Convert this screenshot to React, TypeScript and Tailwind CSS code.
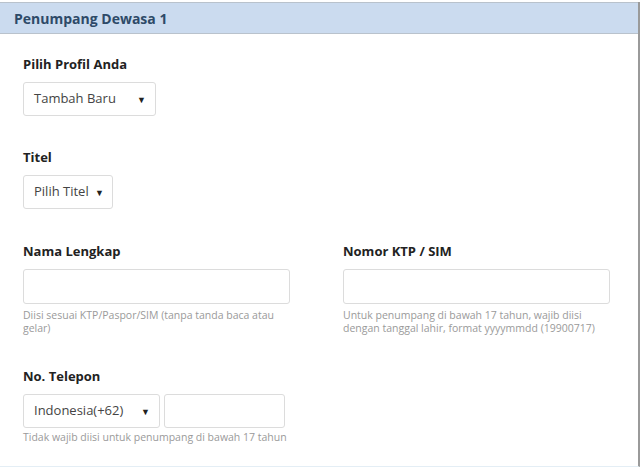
import { ReactNode } from 'react';

const font = { fontFamily: '"Open Sans", "Noto Sans", sans-serif' };

function Caret() {
  return <span className="text-[9px] leading-none text-[#222]">▼</span>;
}

function SelectBox({ label, width, pad }: { label: string; width: string; pad: string }) {
  return (
    <div
      className={`flex h-[34px] ${width} items-center justify-between rounded-[3px] border border-[#dcdcdc] bg-white pl-[10px] ${pad} text-[13px] text-[#444]`}
    >
      <span>{label}</span>
      <Caret />
    </div>
  );
}

function Label({ children }: { children: ReactNode }) {
  return <div className="mb-[9px] text-[13px] font-bold leading-[18px] text-[#222]">{children}</div>;
}

function Help({ children, className = 'mt-[5px]' }: { children: ReactNode; className?: string }) {
  return <p className={`${className} text-[10.5px] leading-[13px] text-[#9a9a9a]`}>{children}</p>;
}

export default function App() {
  return (
    <div className="h-[467px] w-[640px] bg-white pt-[2px]" style={font}>
      <div className="flex h-[465px] flex-col border-r-2 border-[#9a9a9a] border-b border-b-[#e4eef5]">
        {/* Header */}
        <div className="flex h-[32px] items-center border-y border-[#b9c2cc] bg-[#cbdbef] px-[14px]">
          <span className="text-[14px] font-bold text-[#2e4a68]">Penumpang Dewasa 1</span>
        </div>

        <div className="flex flex-col px-[23px] pt-[21px]">
          {/* Profil */}
          <Label>Pilih Profil Anda</Label>
          <SelectBox label="Tambah Baru" width="w-[133px]" pad="pr-[9px]" />

          {/* Titel */}
          <div className="mt-[32px]">
            <Label>Titel</Label>
            <SelectBox label="Pilih Titel" width="w-[90px]" pad="pr-[8px]" />
          </div>

          {/* Nama & KTP */}
          <div className="mt-[33px] grid grid-cols-[267px_267px] gap-x-[53px]">
            <div>
              <Label>Nama Lengkap</Label>
              <div className="h-[35px] rounded-[3px] border border-[#dcdcdc] bg-white" />
              <Help>Diisi sesuai KTP/Paspor/SIM (tanpa tanda baca atau gelar)</Help>
            </div>
            <div>
              <Label>Nomor KTP / SIM</Label>
              <div className="h-[35px] rounded-[3px] border border-[#dcdcdc] bg-white" />
              <Help>Untuk penumpang di bawah 17 tahun, wajib diisi dengan tanggal lahir, format yyyymmdd (19900717)</Help>
            </div>
          </div>

          {/* Telepon */}
          <div className="mt-[32px]">
            <Label>No. Telepon</Label>
            <div className="flex gap-[4px]">
              <SelectBox label="Indonesia(+62)" width="w-[137px]" pad="pr-[9px]" />
              <div className="h-[34px] w-[121px] rounded-[3px] border border-[#dcdcdc] bg-white" />
            </div>
            <Help className="mt-[3px]">Tidak wajib diisi untuk penumpang di bawah 17 tahun</Help>
          </div>
        </div>
      </div>
    </div>
  );
}
